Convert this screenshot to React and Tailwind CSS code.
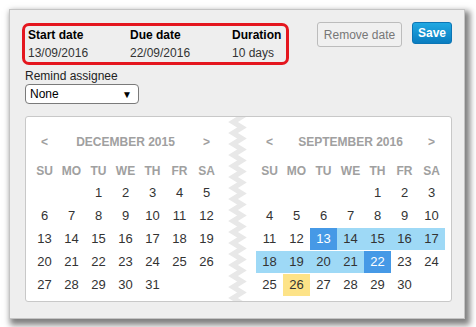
import React from 'react';

const WEEKDAYS = ['SU', 'MO', 'TU', 'WE', 'TH', 'FR', 'SA'];

function buildDays(offset, count) {
  const cells = [];
  for (let i = 0; i < offset; i++) cells.push(null);
  for (let d = 1; d <= count; d++) cells.push(d);
  return cells;
}

function dayClass(day, month) {
  if (month !== 'sep' || !day) return 'text-[#333]';
  if (day === 13 || day === 22) return 'bg-[#4699e6] text-white';
  if (day > 13 && day < 22) return 'bg-[#9ed9f6] text-[#333]';
  if (day === 26) return 'bg-[#fde388] text-[#333]';
  return 'text-[#333]';
}

function Month({ title, offset, count, month }) {
  const days = buildDays(offset, count);
  return (
    <div className="w-[189px]">
      <div className="flex h-[24px] items-center text-[12px] font-bold text-[#a0a0a0]">
        <span className="w-[27px] text-center">&lt;</span>
        <span className="flex-1 text-center">{title}</span>
        <span className="w-[27px] text-center">&gt;</span>
      </div>
      <div className="mt-[6px] grid grid-cols-7 h-[22px] items-center text-[12px] font-bold text-[#a0a0a0]">
        {WEEKDAYS.map((w) => (
          <span key={w} className="text-center">{w}</span>
        ))}
      </div>
      <div className="grid grid-cols-7 auto-rows-[22px] gap-y-[1px] text-[13px]">
        {days.map((d, i) => (
          <div key={i} className={`flex items-center justify-center ${dayClass(d, month)}`}>
            {d}
          </div>
        ))}
      </div>
    </div>
  );
}

function Zigzag() {
  const pts = [];
  for (let y = -6, i = 0; y <= 200; y += 5.5, i++) {
    pts.push(`${i % 2 === 0 ? 13 : 22},${y}`);
  }
  return (
    <svg width="36" height="184" className="block">
      <polyline points={pts.join(' ')} fill="none" stroke="#e8e8e8" strokeWidth="5" />
    </svg>
  );
}

export default function App() {
  return (
    <div className="w-[476px] h-[327px] bg-white pt-[9px] pl-[9px] font-['Liberation_Sans',Arial,sans-serif] text-[12px] text-[#333]">
      <div className="w-[456px] h-[310px] border border-[#c4c4c4] bg-[#eeeeee] pl-[15px] pr-[12px] pt-[13px] shadow-[3px_4px_6px_2px_rgba(0,0,0,0.5)]">
        {/* header */}
        <div className="flex items-start">
          <div className="-ml-[3px] flex h-[42px] w-[267px] rounded-[7px] border-[3px] border-[#e4161e] pl-[3px] leading-[18px]">
            <div className="w-[102px]">
              <div className="font-bold text-black">Start date</div>
              <div>13/09/2016</div>
            </div>
            <div className="w-[102px]">
              <div className="font-bold text-black">Due date</div>
              <div>22/09/2016</div>
            </div>
            <div>
              <div className="font-bold text-black">Duration</div>
              <div>10 days</div>
            </div>
          </div>
          <div className="ml-auto -mt-[1px] flex items-start gap-[10px]">
            <button className="h-[25px] w-[85px] rounded-[3px] border border-[#bcbcbc] bg-[#f0f0f0] text-[12px] text-[#777]">
              Remove date
            </button>
            <button className="h-[22px] w-[40px] rounded-[3px] border border-[#0b75b5] bg-gradient-to-b from-[#20a8e2] to-[#0a7dc0] text-[12px] font-bold text-white">
              Save
            </button>
          </div>
        </div>

        {/* remind */}
        <div className="mt-[4px] leading-[14px] text-[12px] text-[#222]">Remind assignee</div>
        <div className="mt-[1px] flex h-[20px] w-[114px] items-center justify-between rounded-[4px] border border-[#7a7a7a] bg-white pl-[4px] pr-[6px] text-[12px] text-black">
          <span>None</span>
          <span className="text-[10px]">▼</span>
        </div>

        {/* calendars */}
        <div className="mt-[12px] flex h-[186px] w-[427px] rounded-[3px] border border-[#c8c8c8] bg-white pl-[5px]">
          <div className="pt-[13px]">
            <Month title="DECEMBER 2015" offset={2} count={31} month="dec" />
          </div>
          <div className="w-[36px]">
            <Zigzag />
          </div>
          <div className="pt-[13px]">
            <Month title="SEPTEMBER 2016" offset={4} count={30} month="sep" />
          </div>
        </div>
      </div>
    </div>
  );
}
